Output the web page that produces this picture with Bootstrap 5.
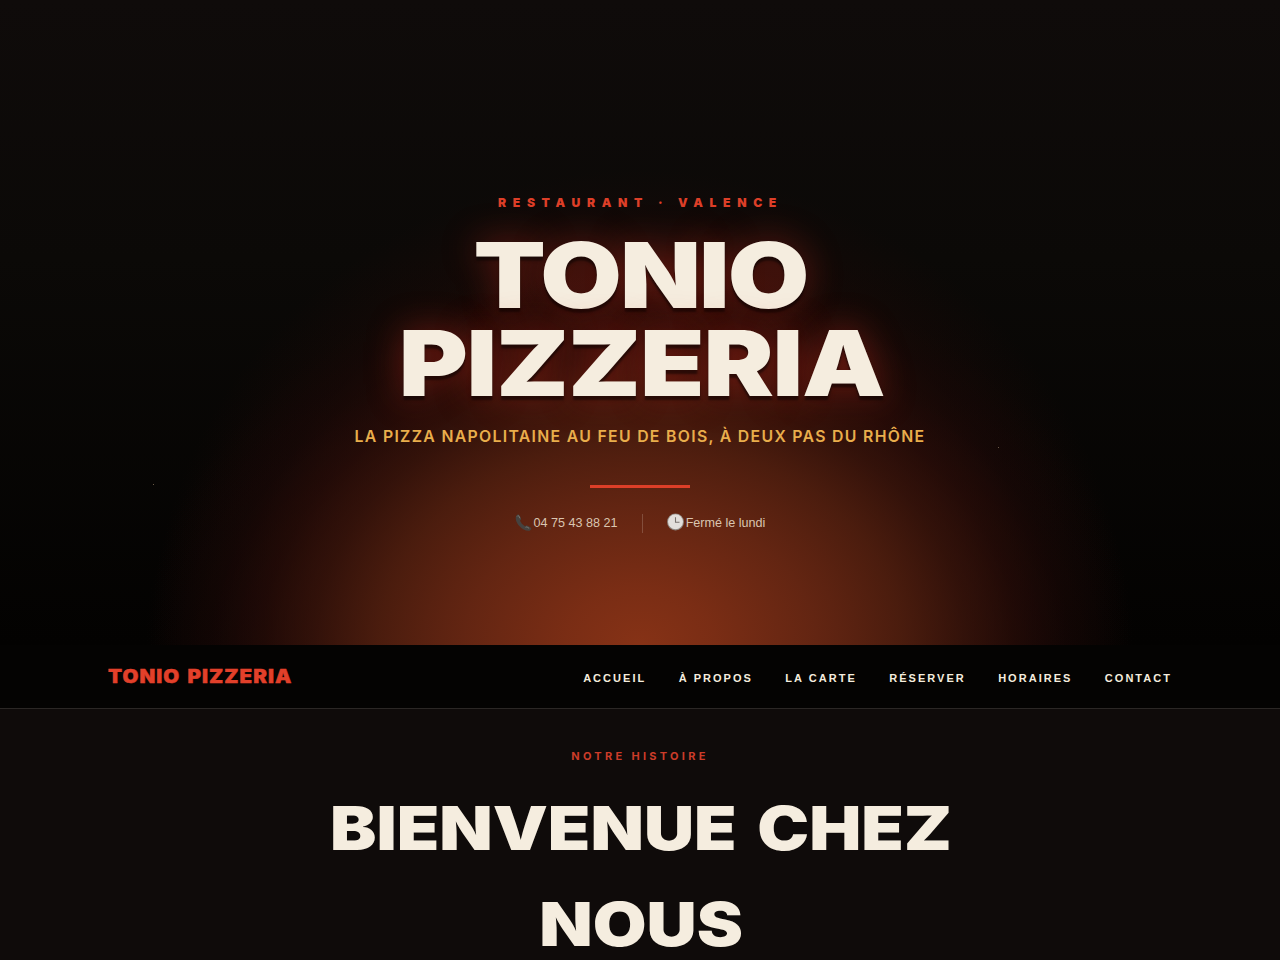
<!DOCTYPE html>
<html lang="fr">
<head>
<meta charset="utf-8">
<meta name="viewport" content="width=device-width, initial-scale=1">
<title>Tonio Pizzeria</title>
<link href="https://cdn.jsdelivr.net/npm/bootstrap@5.3.0/dist/css/bootstrap.min.css" rel="stylesheet">
<style>
  :root { --tomato: #dd3f28; --cream: #f5eddf; --gold: #e9ae4c; --night: #0f0b0a; }
  html, body { height: 100%; overflow: hidden; }
  body { background: var(--night); color: var(--cream); font-family: Inter, "Liberation Sans", sans-serif; }

  .hero {
    height: 645px; padding-top: 192px;
    background:
      radial-gradient(ellipse 495px 385px at 50% 100%,
        rgb(134,50,22) 0%, rgba(124,46,21,.97) 15%, rgba(103,39,19,.92) 35%, rgba(80,31,15,.82) 53%,
        rgba(56,20,11,.7) 66%, rgba(40,12,8,.55) 76%, rgba(28,8,7,.35) 86%, rgba(12,5,4,0) 100%),
      radial-gradient(ellipse 490px 475px at 50% 100%, rgba(66,20,10,.9) 40%, rgba(52,15,9,.6) 68%, rgba(34,10,7,.4) 82%, rgba(20,6,5,0) 100%),
      linear-gradient(180deg, #0f0b0a 0%, #0b0907 40%, #030201 100%);
  }
  .eyebrow { font-size: 12.2px; font-weight: 900; line-height: 21px; letter-spacing: 6.6px; color: var(--tomato); padding-left: 1px; }
  .hero-title {
    font-size: 90.8px; font-weight: 900; line-height: 88px; margin: 18px 0 20px; letter-spacing: -1px; padding-left: 2px;
    transform: scaleX(1.16);
    text-shadow: 0 4px 2px rgba(0,0,0,.5), 0 0 34px rgba(221,50,30,.42);
  }
  .hero-title .first { letter-spacing: -1.7px; margin-right: 2px; }
  .tagline { font-size: 15.8px; font-weight: 600; line-height: 20px; letter-spacing: 1.31px; color: var(--gold); }
  .rule { width: 100px; height: 3px; background: var(--tomato); margin: 38px 0 26px; }
  .contact-line { font: 400 12.6px/19px "Liberation Sans", sans-serif; color: #dac5b0; }
  .contact-line .sep { width: 1px; height: 19px; background: rgba(245,237,223,.2); margin: 0 24px; }
  .contact-line svg { width: 19px; height: 19px; margin: -2px 1px 0 -1px; }
  .ember { position: absolute; width: 1px; height: 1px; background: #6b5a48; }

  .site-nav { height: 64px; background: #040302; border-bottom: 1px solid #2b2725; padding: 0 108px; }
  .brand-name { font-size: 18.2px; font-weight: 900; line-height: 20px; letter-spacing: .9px; word-spacing: 2px; color: #e2402a;
    transform: scaleX(1.13); transform-origin: left; padding-bottom: 2px; -webkit-text-stroke: .4px #e2402a; }
  .links { gap: 32.4px; padding-top: 2px; }
  .links .nav-link { padding: 0; font: 700 11px/20px "Liberation Sans", sans-serif; letter-spacing: 2.03px; color: var(--cream); white-space: nowrap; }

  .about { padding-top: 37px; }
  .kicker { font-size: 11px; font-weight: 700; line-height: 20px; letter-spacing: 3.3px; color: #cc3c29; }
  .about-title { width: fit-content; font-size: 60.5px; font-weight: 900; line-height: 96px; margin: 14px auto 0; padding-left: 2px; letter-spacing: 0; word-spacing: 6px; transform: scaleX(1.148); }
</style>
</head>
<body>
<header class="hero position-relative d-flex flex-column align-items-center text-center">
  <i class="ember" style="left:153px;top:484px"></i>
  <i class="ember" style="left:998px;top:447px"></i>
  <div class="eyebrow text-uppercase">Restaurant · Valence</div>
  <h1 class="hero-title text-uppercase"><span class="first">Tonio</span><br>Pizzeria</h1>
  <div class="tagline text-uppercase">La pizza napolitaine au feu de bois, à deux pas du Rhône</div>
  <div class="rule"></div>
  <div class="contact-line d-flex align-items-center">
    <span class="d-flex align-items-center">
      <svg viewBox="0 0 18 18"><path d="M2.200 2.600C3.400.9 4.800 1.100 5.600 2.900l.9 2c.5 1.200-.1 1.700-.8 2.300.6 2 2.600 4.300 4.700 5.300.7-.6 1.300-1.100 2.400-.5l2.600 1.500c1.500.9 1.200 2.400-.7 3.200C8.600 18.300-.8 8.400 2.200 2.600Z" fill="#45423f"/><path d="M3 3.200c.7-1 1.500-.8 2 .3l.6 1.500M11 13.600c.6-.5 1.200-.4 2 .1l1.300.8" fill="none" stroke="#7d7a74" stroke-width=".9"/></svg>
      04 75 43 88 21
    </span>
    <span class="sep"></span>
    <span class="d-flex align-items-center">
      <svg viewBox="0 0 18 18"><circle cx="9" cy="8.500" r="8" fill="#8f8781"/><circle cx="9" cy="8.300" r="7.100" fill="#e2dfdc"/><path d="M9 4v4.800h3.800" fill="none" stroke="#77716d" stroke-width="1"/></svg>
      Fermé le lundi
    </span>
  </div>
</header>

<nav class="site-nav d-flex align-items-center justify-content-between">
  <div class="brand-name text-uppercase">Tonio Pizzeria</div>
  <div class="links nav flex-nowrap text-uppercase">
    <a class="nav-link" href="#">Accueil</a>
    <a class="nav-link" href="#">À propos</a>
    <a class="nav-link" href="#">La carte</a>
    <a class="nav-link" href="#">Réserver</a>
    <a class="nav-link" href="#">Horaires</a>
    <a class="nav-link" href="#">Contact</a>
  </div>
</nav>

<section class="about text-center">
  <div class="kicker text-uppercase">Notre histoire</div>
  <h2 class="about-title text-uppercase">Bienvenue chez<br>nous</h2>
</section>
</body>
</html>
